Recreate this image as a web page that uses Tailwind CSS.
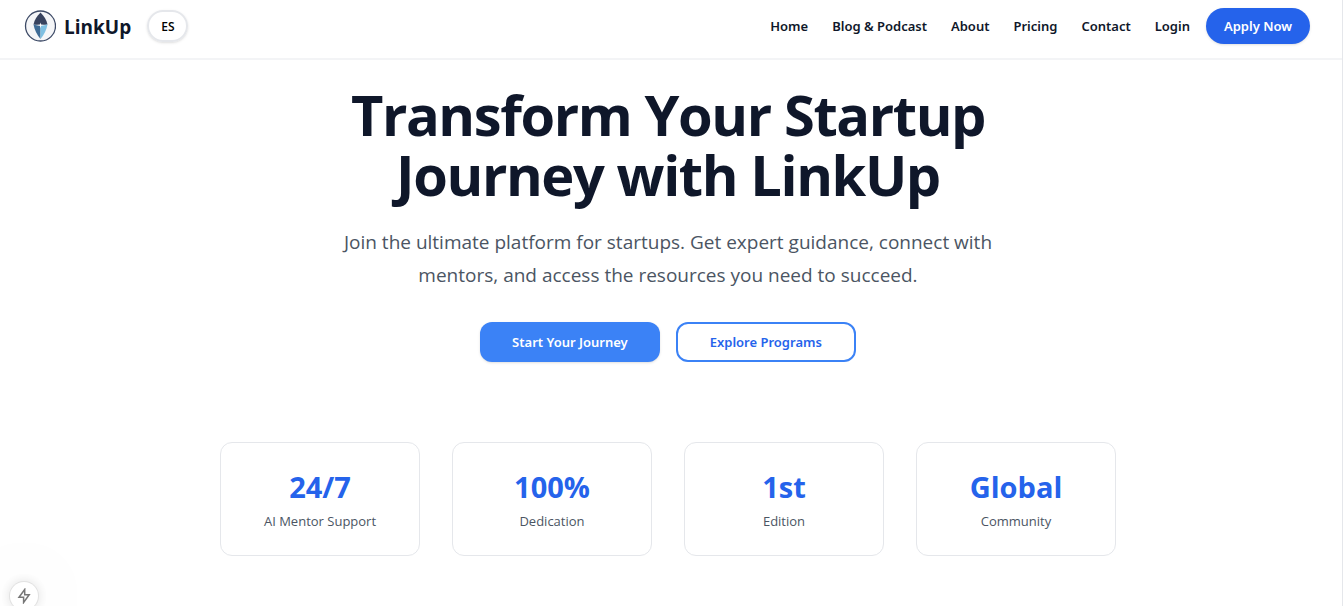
<!DOCTYPE html>
<html lang="en">
<head>
<meta charset="utf-8">
<meta name="viewport" content="width=device-width, initial-scale=1">
<title>LinkUp</title>
<script src="https://cdn.jsdelivr.net/npm/@tailwindcss/browser@4"></script>
</head>
<body class="min-h-screen overflow-hidden border-r border-gray-200 bg-white font-['Open_Sans','Noto_Sans',sans-serif] text-[#0f172a]">
<header class="flex items-start justify-between border-b-2 border-gray-100 pt-2 pr-8 pb-3.5 pl-6">
  <div class="flex items-center gap-4">
    <a href="#" class="flex h-9 items-center gap-2 text-[19px] font-bold">
      <svg class="size-8" viewBox="0 0 32 32" aria-hidden="true">
        <circle cx="16.500" cy="16" r="15" fill="#f5f6f8" stroke="#3d4a66" stroke-width="1.300"/>
        <path d="M16.500 2.500C13 6 10.500 9.500 9.500 14.500l7 1 7-1c-1-5-3.500-8.500-7-12z" fill="#38435f"/>
        <path d="M9.500 14.500l7 1V29c-3.500-4-6-9-7-14.500z" fill="#3f6c96"/>
        <path d="M23.500 14.500l-7 1V29c3.500-4 6-9 7-14.500z" fill="#7fc0e2"/>
        <path d="M16.500 12.500l.6 2 4.900.6-4.900.7-.6 2.500-.6-2.500-4.900-.7 4.900-.6z" fill="#fff"/>
      </svg>
      <span class="pt-0.5">LinkUp</span>
    </a>
    <button class="h-8 rounded-full border-2 border-gray-200 px-3 pt-0.5 text-xs font-semibold text-black shadow-sm">ES</button>
  </div>
  <nav class="flex h-9 items-center gap-6 font-['Noto_Sans',sans-serif] text-[13px] font-semibold">
    <a href="#" class="pt-0.5">Home</a>
    <a href="#" class="pt-0.5">Blog &amp; Podcast</a>
    <a href="#" class="pt-0.5">About</a>
    <a href="#" class="pt-0.5">Pricing</a>
    <a href="#" class="pt-0.5">Contact</a>
    <a href="#" class="pt-0.5">Login</a>
    <a href="#" class="-ml-2 flex h-9 items-center rounded-full bg-[#2563eb] px-4.5 pt-0.5 text-white shadow-sm">Apply Now</a>
  </nav>
</header>
<main class="flex flex-col items-center pt-6 pr-1.5">
  <h1 class="text-center text-[56px] leading-[60px] font-bold tracking-tight">Transform Your Startup<br>Journey with LinkUp</h1>
  <p class="mt-5.5 text-center text-[19px] leading-[33px] text-[#4b5563]">Join the ultimate platform for startups. Get expert guidance, connect with<br>mentors, and access the resources you need to succeed.</p>
  <div class="mt-7.5 flex gap-4 font-['Noto_Sans',sans-serif] text-[13px] font-semibold">
    <button class="h-10 rounded-xl bg-[#3b82f6] px-8 pt-0.5 text-white shadow-sm">Start Your Journey</button>
    <button class="h-10 rounded-xl border-2 border-[#3b82f6] px-8 pt-0.5 text-[#2563eb]">Explore Programs</button>
  </div>
  <section class="mt-20 grid w-full max-w-4xl grid-cols-4 gap-8 text-center text-[13px] leading-5 text-[#4b5563]">
    <div class="rounded-xl border border-gray-200 px-6 pt-6.5 pb-6"><div class="mb-1.5 text-[29px] leading-9 font-bold text-[#2563eb]">24/7</div>AI Mentor Support</div>
    <div class="rounded-xl border border-gray-200 px-6 pt-6.5 pb-6"><div class="mb-1.5 text-[29px] leading-9 font-bold text-[#2563eb]">100%</div>Dedication</div>
    <div class="rounded-xl border border-gray-200 px-6 pt-6.5 pb-6"><div class="mb-1.5 text-[29px] leading-9 font-bold text-[#2563eb]">1st</div>Edition</div>
    <div class="rounded-xl border border-gray-200 px-6 pt-6.5 pb-6"><div class="mb-1.5 text-[29px] leading-9 font-bold text-[#2563eb]">Global</div>Community</div>
  </section>
</main>
<button aria-label="Quick actions" class="fixed -bottom-1 left-2.5 flex size-7 items-center justify-center rounded-full bg-white text-[#777777] shadow-[0_0_0_1px_#e2e2e2,0_0_12px_rgba(0,0,0,0.14),0_0_80px_rgba(0,0,0,0.14)]">
  <svg class="size-4" viewBox="0 0 16 16" fill="none" stroke="currentColor" stroke-width="1.500" aria-hidden="true"><path d="M8.700 1.500L3 9.300h4.600V14.500L13.200 6.700H8.700z"/></svg>
</button>
</body>
</html>
